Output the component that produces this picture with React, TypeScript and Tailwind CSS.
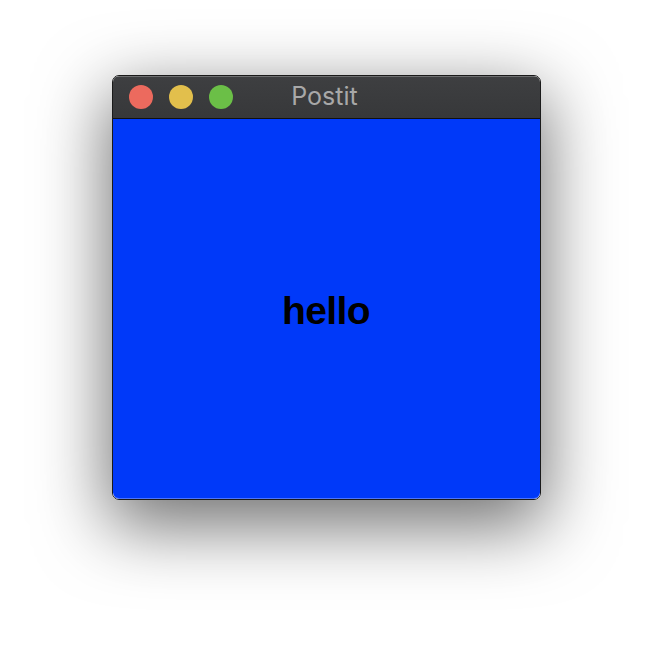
export default function App() {
  return (
    <div className="w-[652px] h-[648px] bg-white flex justify-center pt-[75px]" style={{ fontFamily: 'Inter, "Liberation Sans", Arial, sans-serif' }}>
      <div className="w-[429px] h-[425px] flex flex-col rounded-[7px] border border-[#1a1a1a] overflow-hidden shadow-[0_22px_70px_4px_rgba(0,0,0,0.56)]">
        <div className="relative h-[43px] shrink-0 bg-gradient-to-b from-[#3e3f41] to-[#37383a] border-b border-[#111] flex items-center shadow-[inset_0_1px_0_rgba(255,255,255,0.25)]">
          <div className="flex items-center gap-4 pl-4">
            <div className="w-6 h-6 rounded-full bg-[#ec6a5e]" />
            <div className="w-6 h-6 rounded-full bg-[#e2bf4c]" />
            <div className="w-6 h-6 rounded-full bg-[#6bbf47]" />
          </div>
          <div className="absolute inset-0 flex items-center justify-center text-[25px] text-[#a8a8a8] pr-[3px]">
            Postit
          </div>
        </div>
        <div className="flex-1 bg-[#0039f9] flex items-center justify-center rounded-b-[6px] shadow-[inset_0_-1px_0_rgba(255,255,255,0.3)]">
          <span className="text-[39px] font-bold text-black tracking-[-0.6px] pt-[4px]" style={{ fontFamily: '"Liberation Sans", Arial, sans-serif' }}>hello</span>
        </div>
      </div>
    </div>
  );
}
